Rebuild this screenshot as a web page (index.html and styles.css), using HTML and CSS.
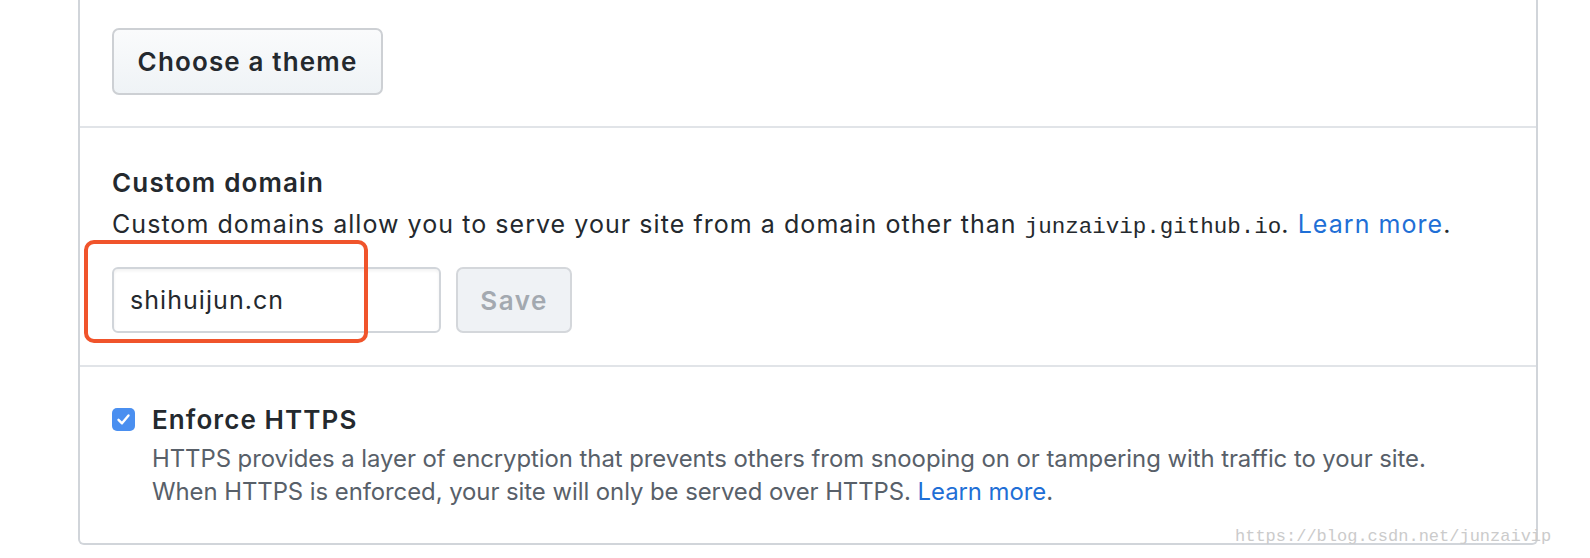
FILE: index.html
```html
<!DOCTYPE html>
<html>
<head>
<meta charset="utf-8">
<link rel="stylesheet" href="styles.css">
</head>
<body>
<div class="panel">
  <section class="sec sec-theme">
    <button class="btn btn-theme">Choose a theme</button>
  </section>
  <section class="sec sec-domain">
    <h4 class="title">Custom domain</h4>
    <p class="desc">Custom domains allow you to serve your site from a domain other than <code class="mono">junzaivip.github.io</code>. <a class="link" href="#">Learn more</a>.</p>
    <div class="form-row">
      <div class="input-wrap">
        <div class="input">shihuijun.cn</div>
        <div class="highlight"></div>
      </div>
      <button class="btn btn-save">Save</button>
    </div>
  </section>
  <section class="sec sec-https">
    <div class="check-row">
      <span class="checkbox">
        <svg width="23" height="23" viewBox="0 0 23 23"><path d="M6.5 11.8 L10 15.3 L16.5 7.5" fill="none" stroke="#fff" stroke-width="2.4" stroke-linecap="round" stroke-linejoin="round"/></svg>
      </span>
      <div class="check-body">
        <div class="check-label">Enforce HTTPS</div>
        <p class="note">HTTPS provides a layer of encryption that prevents others from snooping on or tampering with traffic to your site.<br>When HTTPS is enforced, your site will only be served over HTTPS. <a class="link" href="#">Learn more</a>.</p>
      </div>
    </div>
  </section>
</div>
<div class="watermark">https://blog.csdn.net/junzaivip</div>
</body>
</html>
```
FILE: styles.css
```css
html, body {
  margin: 0;
  padding: 0;
  background: #fff;
}
body {
  font-family: Inter, "Liberation Sans", Arial, sans-serif;
  color: #24292e;
  position: relative;
  width: 1590px;
  height: 558px;
  overflow: hidden;
}
.panel {
  margin-left: 78px;
  width: 1460px;
  box-sizing: border-box;
  border: 2px solid #d1d5da;
  border-top: none;
  border-radius: 0 0 6px 6px;
}
.sec {
  padding-left: 32px;
  padding-right: 32px;
}
.sec + .sec {
  border-top: 2px solid #e1e4e8;
}
.sec-theme {
  padding-top: 28px;
  padding-bottom: 31px;
}
.btn {
  font-family: Inter, "Liberation Sans", Arial, sans-serif;
  font-weight: 600;
  letter-spacing: 1.15px;
  border: 2px solid #cdd0d4;
  border-radius: 7px;
  box-sizing: border-box;
  height: 67px;
  display: inline-flex;
  align-items: center;
  justify-content: center;
}
.btn-theme {
  width: 271px;
  font-size: 26px;
  color: #24292e;
  background: linear-gradient(#fafbfc, #eff3f6);
}
.sec-domain {
  padding-top: 37px;
  padding-bottom: 32px;
}
.title {
  margin: 0;
  font-size: 26px;
  line-height: 36px;
  font-weight: 600;
  letter-spacing: 1.15px;
}
.desc {
  margin: 6px 0 0;
  font-size: 25px;
  line-height: 34px;
  letter-spacing: 1.05px;
}
.mono {
  font-family: "Liberation Mono", monospace;
  font-size: 22.5px;
  line-height: 1;
  letter-spacing: 0;
}
.link {
  color: #1f6fd6;
  text-decoration: none;
}
.form-row {
  margin-top: 26px;
  display: flex;
  gap: 15px;
}
.input-wrap {
  position: relative;
}
.input {
  width: 329px;
  height: 66px;
  box-sizing: border-box;
  border: 2px solid #d1d5da;
  border-radius: 6px;
  box-shadow: inset 0 2px 3px rgba(27,31,35,0.06);
  padding-left: 16px;
  font-size: 25px;
  letter-spacing: 1.05px;
  display: flex;
  align-items: center;
}
.highlight {
  position: absolute;
  left: -28px;
  top: -27px;
  width: 284px;
  height: 103px;
  box-sizing: border-box;
  border: 4px solid #f0542b;
  border-radius: 10px;
}
.btn-save {
  width: 116px;
  height: 66px;
  font-size: 26px;
  letter-spacing: 1.5px;
  color: #a3a9b0;
  background: #eff2f5;
  border-color: #d4d7db;
}
.sec-https {
  padding-top: 41px;
  padding-bottom: 35px;
}
.check-row {
  display: flex;
  gap: 17px;
}
.checkbox {
  width: 23px;
  height: 23px;
  border-radius: 5px;
  background: #4a8ff0;
  flex: none;
  display: block;
}
.checkbox svg {
  display: block;
}
.check-label {
  font-size: 26px;
  font-weight: 600;
  letter-spacing: 1.1px;
  line-height: 24px;
}
.note {
  margin: 10px 0 0;
  font-size: 23.9px;
  line-height: 33px;
  letter-spacing: -0.05px;
  color: #586069;
  white-space: nowrap;
}
.watermark {
  position: absolute;
  left: 1235px;
  top: 527px;
  font-family: "Liberation Mono", monospace;
  font-size: 17px;
  color: #cbcbcb;
  line-height: 20px;
}
```
